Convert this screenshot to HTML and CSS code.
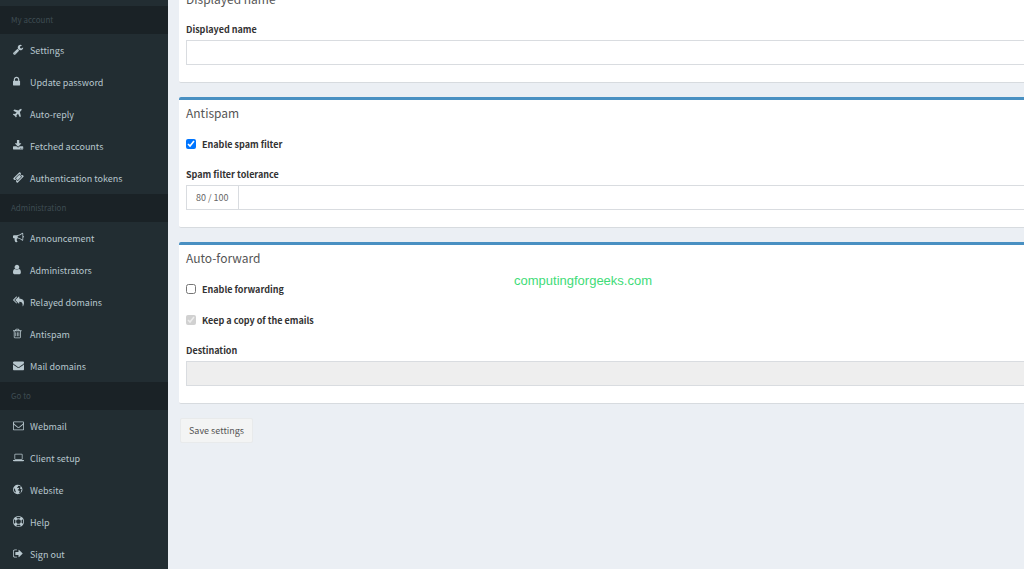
FILE: index.html
```html
<!DOCTYPE html>
<html lang="en">
<head>
<meta charset="utf-8">
<title>Settings</title>
<link rel="stylesheet" href="styles.css">
</head>
<body>
<div class="app">
<aside class="sidebar">
<nav>
<h2 class="nav-header">My account</h2>
<ul class="nav-list">
<li><a href="#"><svg class="icon" viewBox="64 0 1792 1792"><path d="M448 1472q0-26-19-45t-45-19-45 19-19 45 19 45 45 19 45-19 19-45zm644-420l-682 682q-37 37-90 37-52 0-91-37l-106-108q-38-36-38-90 0-53 38-91l681-681q39 98 114.500 173.500t173.500 114.500zm634-435q0 39-23 106-47 134-164.500 217.500t-258.500 83.500q-185 0-316.500-131.500t-131.500-316.500 131.500-316.500 316.500-131.500q58 0 121.500 16.500t107.500 46.500q16 11 16 28t-16 28l-293 169v224l193 107q5-3 79-48.500t135.500-81 70.500-35.500q15 0 23.500 10t8.500 25z"/></svg>Settings</a></li>
<li><a href="#"><svg class="icon" viewBox="320 0 1792 1792"><path d="M640 768h512v-192q0-106-75-181t-181-75-181 75-75 181v192zm832 96v576q0 40-28 68t-68 28h-960q-40 0-68-28t-28-68v-576q0-40 28-68t68-28h32v-192q0-184 132-316t316-132 316 132 132 316v192h32q40 0 68 28t28 68z"/></svg>Update password</a></li>
<li><a href="#"><svg class="icon" viewBox="192 0 1792 1792"><path d="M1568 160q44 52 12 148t-108 172l-161 161 160 696q5 19-12 33l-128 96q-7 6-19 6-4 0-7-1-15-3-21-16l-279-508-259 259 53 194q5 17-8 31l-96 96q-9 9-23 9h-2q-15-2-24-13l-189-252-252-189q-11-7-13-23-1-13 9-25l96-97q9-9 23-9 6 0 8 1l194 53 259-259-508-279q-14-8-17-24-2-16 9-27l128-128q14-13 30-8l665 159 160-160q76-76 172-108t148 12z"/></svg>Auto-reply</a></li>
<li><a href="#"><svg class="icon" viewBox="64 0 1792 1792"><path d="M1344 1344q0-26-19-45t-45-19-45 19-19 45 19 45 45 19 45-19 19-45zm256 0q0-26-19-45t-45-19-45 19-19 45 19 45 45 19 45-19 19-45zm128-224v320q0 40-28 68t-68 28h-1472q-40 0-68-28t-28-68v-320q0-40 28-68t68-28h465l135 136q58 56 136 56t136-56l136-136h464q40 0 68 28t28 68zm-325-569q17 41-14 70l-448 448q-18 19-45 19t-45-19l-448-448q-31-29-14-70 17-39 59-39h256v-448q0-26 19-45t45-19h256q26 0 45 19t19 45v448h256q42 0 59 39z"/></svg>Fetched accounts</a></li>
<li><a href="#"><svg class="icon" viewBox="0 0 1792 1792"><path d="M1024 452l316 316-572 572-316-316zm-211 979l618-618q19-19 19-45t-19-45l-362-362q-18-18-45-18t-45 18l-618 618q-19 19-19 45t19 45l362 362q18 18 45 18t45-18zm889-637l-907 908q-37 37-90.500 37t-90.500-37l-126-126q56-56 56-136t-56-136-136-56-136 56l-125-126q-37-37-37-90.500t37-90.500l907-906q37-37 90.500-37t90.500 37l125 125q-56 56-56 136t56 136 136 56 136-56l126 125q37 37 37 90.500t-37 90.500z"/></svg>Authentication tokens</a></li>
</ul>
<h2 class="nav-header">Administration</h2>
<ul class="nav-list">
<li><a href="#"><svg class="icon" viewBox="0 0 1792 1792"><path d="M1664 640q53 0 90.500 37.500t37.500 90.500-37.500 90.500-90.500 37.500v384q0 52-38 90t-90 38q-417-347-812-380-58 19-91 66t-31 100.500 40 92.500q-20 33-23 65.500t6 58 33.500 55 48 50 61.500 50.500q-29 58-111.500 83t-168.500 11.500-132-55.500q-7-23-29.500-87.500t-32-94.500-23-89-15-101 3.500-98.500 22-110.500h-122q-66 0-113-47t-47-113v-192q0-66 47-113t113-47h480q435 0 896-384 52 0 90 38t38 90v384zm-128 604v-954q-394 302-768 343v270q377 42 768 341z"/></svg>Announcement</a></li>
<li><a href="#"><svg class="icon" viewBox="256 0 1792 1792"><path d="M1536 1399q0 109-62.500 187t-150.500 78h-854q-88 0-150.500-78t-62.500-187q0-85 8.500-160.500t31.500-152 58.500-131 94-89 134.500-34.500q131 128 313 128t313-128q76 0 134.500 34.500t94 89 58.500 131 31.500 152 8.500 160.500zm-256-887q0 159-112.500 271.500t-271.500 112.500-271.500-112.500-112.500-271.500 112.500-271.500 271.500-112.500 271.500 112.500 112.500 271.500z"/></svg>Administrators</a></li>
<li><a href="#"><svg class="icon" viewBox="0 0 1792 1792"><path d="M640 1082v70q0 42-39 59-13 5-25 5-27 0-45-19l-512-512q-19-19-19-45t19-45l512-512q29-31 70-14 39 17 39 59v69l-397 398q-19 19-19 45t19 45zm1152 58q0 58-17 133.500t-38.500 138-48 125-40.500 90.500l-20 40q-8 17-28 17-6 0-9-1-25-8-23-34 43-400-106-565-64-71-170.500-110.500t-267.500-52.500v251q0 42-39 59-13 5-25 5-27 0-45-19l-512-512q-19-19-19-45t19-45l512-512q29-31 70-14 39 17 39 59v262q411 28 599 221 169 173 169 509z"/></svg>Relayed domains</a></li>
<li><a href="#"><svg class="icon" viewBox="192 0 1792 1792"><path d="M704 736v576q0 14-9 23t-23 9h-64q-14 0-23-9t-9-23v-576q0-14 9-23t23-9h64q14 0 23 9t9 23zm256 0v576q0 14-9 23t-23 9h-64q-14 0-23-9t-9-23v-576q0-14 9-23t23-9h64q14 0 23 9t9 23zm256 0v576q0 14-9 23t-23 9h-64q-14 0-23-9t-9-23v-576q0-14 9-23t23-9h64q14 0 23 9t9 23zm128 724v-948h-896v948q0 22 7 40.500t14.500 27 10.500 8.500h832q3 0 10.500-8.500t14.500-27 7-40.500zm-672-1076h448l-48-117q-7-9-17-11h-317q-10 2-17 11zm928 32v64q0 14-9 23t-23 9h-96v948q0 83-47 143.500t-113 60.500h-832q-66 0-113-58.500t-47-141.500v-952h-96q-14 0-23-9t-9-23v-64q0-14 9-23t23-9h309l70-167q15-37 54-63t79-26h320q40 0 79 26t54 63l70 167h309q14 0 23 9t9 23z"/></svg>Antispam</a></li>
<li><a href="#"><svg class="icon" viewBox="0 0 1792 1792"><path d="M1792 710v794q0 66-47 113t-113 47h-1472q-66 0-113-47t-47-113v-794q44 49 101 87 362 246 497 345 57 42 92.500 65.500t94.500 48 110 24.500h2q51 0 110-24.500t94.500-48 92.500-65.500q170-123 498-345 57-39 100-87zm0-294q0 79-49 151t-122 123q-376 261-468 325-10 7-42.500 30.500t-54 38-52 32.500-57.500 27-50 9h-2q-23 0-50-9t-57.500-27-52-32.500-54-38-42.500-30.500q-91-64-262-182.500t-205-142.500q-62-42-117-115.500t-55-136.500q0-78 41.500-130t118.500-52h1472q65 0 112.500 47t47.500 113z"/></svg>Mail domains</a></li>
</ul>
<h2 class="nav-header">Go to</h2>
<ul class="nav-list">
<li><a href="#"><svg class="icon" viewBox="0 0 1792 1792"><path d="M1664 1504v-768q-32 36-69 66-268 206-426 338-51 43-83 67t-86.500 48.500-102.500 24.500h-2q-48 0-102.500-24.500t-86.500-48.500-83-67q-158-132-426-338-37-30-69-66v768q0 13 9.500 22.500t22.500 9.500h1472q13 0 22.500-9.500t9.500-22.500zm0-1051v-24.500l-.5-13-3-12.500-5.500-9-9-7.500-14-2.500h-1472q-13 0-22.500 9.500t-9.500 22.500q0 168 147 284 193 152 401 317 6 5 35 29.500t46 37.500 44.500 31.500 50.500 27.500 43 9h2q20 0 43-9t50.500-27.500 44.500-31.500 46-37.500 35-29.500q208-165 401-317 54-43 100.500-115.500t46.500-131.500zm128-37v1088q0 66-47 113t-113 47h-1472q-66 0-113-47t-47-113v-1088q0-66 47-113t113-47h1472q66 0 113 47t47 113z"/></svg>Webmail</a></li>
<li><a href="#"><svg class="icon" viewBox="0 0 1920 1792"><path d="M416 1280q-66 0-113-47t-47-113v-704q0-66 47-113t113-47h1088q66 0 113 47t47 113v704q0 66-47 113t-113 47h-1088zm-32-864v704q0 13 9.500 22.500t22.500 9.500h1088q13 0 22.500-9.500t9.500-22.500v-704q0-13-9.500-22.500t-22.500-9.500h-1088q-13 0-22.500 9.500t-9.500 22.500zm1376 928h160v96q0 40-47 68t-113 28h-1600q-66 0-113-28t-47-68v-96h1760zm-720 96q16 0 16-16t-16-16h-160q-16 0-16 16t16 16h160z"/></svg>Client setup</a></li>
<li><a href="#"><svg class="icon" viewBox="128 0 1792 1792"><path fill-rule="evenodd" d="M896 128a768 768 0 1 1 0 1536a768 768 0 1 1 0-1536zM1060 270l-100 70-60 130-130 100 90 90 180-50 90 100-60 130-160 70 20 140 180 20 100 130-50 170-110 150q260-20 420-230l-60-100 40-150 110-110-80-120-140-10-60-130 60-130 100-70q-150-140-380-170zM330 640q-90 170-60 370 60 230 260 380l60-160-80-150-30-180-110-110z"/></svg>Website</a></li>
<li><a href="#"><svg class="icon" viewBox="0 0 1792 1792"><path d="M896 0q182 0 348 71t286 191 191 286 71 348-71 348-191 286-286 191-348 71-348-71-286-191-191-286-71-348 71-348 191-286 286-191 348-71zm0 128q-190 0-361 90l194 194q82-28 167-28t167 28l194-194q-171-90-361-90zm-678 1129l194-194q-28-82-28-167t28-167l-194-194q-90 171-90 361t90 361zm678 407q190 0 361-90l-194-194q-82 28-167 28t-167-28l-194 194q171 90 361 90zm0-384q159 0 271.500-112.500t112.500-271.500-112.500-271.500-271.500-112.500-271.500 112.500-112.500 271.500 112.500 271.500 271.500 112.500zm484-217l194 194q90-171 90-361t-90-361l-194 194q28 82 28 167t-28 167z"/></svg>Help</a></li>
<li><a href="#"><svg class="icon" viewBox="64 0 1792 1792"><path d="M704 1440q0 4 1 20t.5 26.500-3 23.500-10 19.500-20.500 6.500h-320q-119 0-203.500-84.500t-84.500-203.500v-704q0-119 84.500-203.500t203.500-84.500h320q13 0 22.500 9.500t9.500 22.500q0 4 1 20t.5 26.500-3 23.500-10 19.500-20.500 6.500h-320q-66 0-113 47t-47 113v704q0 66 47 113t113 47h312l11.500 1 11.500 3 8 5.500 7 9 2 13.500zm928-544q0 26-19 45l-544 544q-19 19-45 19t-45-19-19-45v-288h-448q-26 0-45-19t-19-45v-384q0-26 19-45t45-19h448v-288q0-26 19-45t45-19 45 19l544 544q19 19 19 45z"/></svg>Sign out</a></li>
</ul>
</nav>
</aside>
<main class="content">
<form class="settings">
<section class="card">
<h3 class="card-title">Displayed name</h3>
<div class="field"><label class="label" for="name">Displayed name</label><input class="input" id="name" type="text"></div>
</section>
<section class="card">
<h3 class="card-title">Antispam</h3>
<label class="check"><input type="checkbox" checked>Enable spam filter</label>
<div class="field"><label class="label" for="tolerance">Spam filter tolerance</label>
<div class="input-group"><span class="addon">80 / 100</span><input class="input" id="tolerance" type="text"></div></div>
</section>
<section class="card">
<h3 class="card-title">Auto-forward</h3>
<label class="check"><input type="checkbox">Enable forwarding</label>
<label class="check"><input type="checkbox" checked disabled>Keep a copy of the emails</label>
<div class="field"><label class="label" for="destination">Destination</label><input class="input" id="destination" type="text" disabled></div>
</section>
<button class="save" type="button">Save settings</button>
</form>
</main>
<div class="watermark">computingforgeeks.com</div>
</div>
</body>
</html>
```
FILE: styles.css
```css
* { box-sizing: border-box; }
body {
  margin: 0;
  overflow: hidden;
  background: #ebeff4;
  color: #333;
  font-family: "Noto Sans CJK SC", "Noto Sans", sans-serif;
  font-size: 9px;
  line-height: 16px;
}
.app { position: relative; display: flex; height: 100vh; }
.sidebar {
  flex: none;
  width: 168px;
  padding-top: 6px;
  background: #222d32;
  overflow: hidden;
}
.nav-header {
  margin: 0;
  padding: 6px 11px;
  background: #1a2226;
  color: #3e4c52;
  font-size: 8px;
  font-weight: 400;
}
.nav-list { margin: 0; padding: 0; list-style: none; }
.nav-list a {
  display: flex;
  align-items: center;
  gap: 6px;
  height: 32px;
  padding: 2px 0 0 13px;
  color: #b8c7ce;
  text-decoration: none;
}
.icon { flex: none; width: 11px; height: 11px; margin-bottom: 3px; fill: currentColor; }
.content { flex: 1; min-width: 0; padding-left: 11px; }
.settings { margin: -17px -20px 0 0; }
.card {
  display: flex;
  flex-direction: column;
  gap: 14px;
  margin-bottom: 14px;
  padding: 6px 7px 17px;
  border-top: 3px solid #4990c2;
  border-bottom: 1px solid #d7dbdf;
  border-radius: 2px;
  background: #fff;
}
.card-title {
  margin: 0 0 3px;
  color: #555;
  font-size: 12px;
  font-weight: 400;
  line-height: 13px;
}
.field { display: flex; flex-direction: column; gap: 2px; }
.label, .check { font-weight: 700; }
.check { display: flex; align-items: center; gap: 6px; height: 17px; padding-top: 1px; }
.check input { width: 10px; height: 10px; margin: 0 0 3px; }
.input {
  flex: 1 0 auto;
  min-width: 0;
  height: 25px;
  padding: 4px 8px;
  border: 1px solid #d9dce0;
  border-radius: 0;
  background: #fff;
  color: #555;
  font: inherit;
}
.input:disabled { background: #eee; }
.input-group { display: flex; }
.addon {
  padding: 4px 9px 3px;
  border: 1px solid #d9dce0;
  border-right: 0;
  color: #666;
}
.save {
  display: block;
  margin: 0 0 0 1px;
  padding: 4px 8px 3px;
  border: 1px solid #e8eaeb;
  border-radius: 2px;
  background: #f3f4f4;
  color: #555;
  font: inherit;
}
.watermark {
  position: absolute;
  top: 273px;
  left: 514px;
  color: #3fdc78;
  font-family: "Liberation Sans", Arial, sans-serif;
  font-size: 13px;
}
```
